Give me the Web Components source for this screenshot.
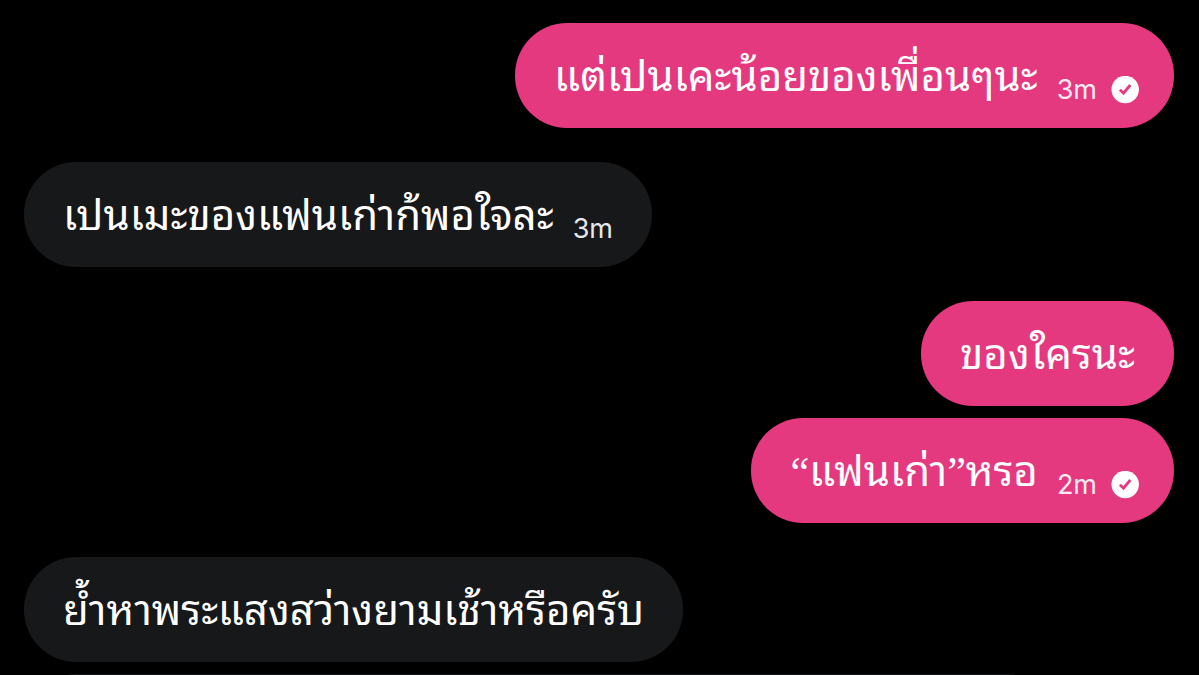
<!DOCTYPE html>
<html lang="th">
<head>
<meta charset="utf-8">
<meta name="viewport" content="width=device-width, initial-scale=1">
<title>Chat</title>
<style>
  body {
    margin: 0;
    background: #000;
  }
</style>
</head>
<body>

<chat-thread>
  <message-group side="sent">
    <chat-bubble side="sent" time="3m" read>แต่เปนเคะน้อยของเพื่อนๆนะ</chat-bubble>
  </message-group>
  <message-group>
    <chat-bubble time="3m">เปนเมะของแฟนเก่าก้พอใจละ</chat-bubble>
  </message-group>
  <message-group side="sent">
    <chat-bubble side="sent">ของใครนะ</chat-bubble>
    <chat-bubble side="sent" time="2m" read>“แฟนเก่า”หรอ</chat-bubble>
  </message-group>
  <message-group>
    <chat-bubble>ย้ำหาพระแสงสว่างยามเช้าหรือครับ</chat-bubble>
    <chat-bubble wide></chat-bubble>
  </message-group>
</chat-thread>

<script>
class ChatThread extends HTMLElement {
  constructor() {
    super();

    const shadow = this.attachShadow({ mode: 'open' });
    shadow.innerHTML = `
      <style>
        :host {
          display: flex;
          flex-direction: column;
          gap: 34px;
          box-sizing: border-box;
          height: 100vh;
          padding: 23px 25px 0 24px;
          overflow: hidden;
          background: #000;
          color: #fff;
          font-family: Inter, sans-serif;
        }
      </style>
      <slot></slot>
    `;
  }
}

class MessageGroup extends HTMLElement {
  constructor() {
    super();

    const shadow = this.attachShadow({ mode: 'open' });
    shadow.innerHTML = `
      <style>
        :host {
          display: flex;
          flex-direction: column;
          flex-shrink: 0;
          align-items: flex-start;
          gap: 12px;
        }
        :host([side="sent"]) {
          align-items: flex-end;
        }
      </style>
      <slot></slot>
    `;
  }
}

class ReadBadge extends HTMLElement {
  constructor() {
    super();

    const shadow = this.attachShadow({ mode: 'open' });
    shadow.innerHTML = `
      <style>
        :host {
          display: block;
          width: 28px;
          height: 28px;
        }
        svg {
          display: block;
        }
      </style>
      <svg width="28" height="28" viewBox="0 0 28 28" role="img" aria-label="Read">
        <circle cx="14.2" cy="13.5" r="13.7" fill="#fff"/>
        <path d="M8.9 13.7 L12.5 17.2 L19.3 9" fill="none" stroke="#e5397f" stroke-width="2.8"/>
      </svg>
    `;
  }
}

class ChatBubble extends HTMLElement {
  constructor() {
    super();

    // Attach a shadow DOM to the element.
    const shadow = this.attachShadow({ mode: 'open' });

    const template = document.createElement('template');
    template.innerHTML = `
      <style>
        :host {
          display: flex;
          align-items: center;
          box-sizing: border-box;
          min-height: 105px;
          max-width: 90%;
          padding: 0 39px;
          border-radius: 52px;
          background: #17181a;
        }
        :host([side="sent"]) {
          background: #e5397f;
        }
        :host([read]) {
          padding-right: 35px;
        }
        /* Long message, cut by the bottom of the window */
        :host([wide]) {
          width: 90%;
        }
        .text {
          margin: 0;
          padding-top: 2px;
          font-family: "Liberation Serif", Thonburi, "Noto Sans Thai Looped", "Noto Looped Thai", Waree, serif;
          font-size: 42px;
          line-height: 56px;
        }
        .meta {
          display: flex;
          align-items: center;
          gap: 14px;
          margin: 28px 0 0 19px;
          font-size: 27px;
          line-height: 28px;
        }
        .meta[hidden] {
          display: none;
        }
        time {
          opacity: 0.9;
        }
      </style>
      <p class="text"><slot></slot></p>
      <div class="meta" hidden><time></time></div>
    `;

    shadow.appendChild(template.content.cloneNode(true));
  }

  connectedCallback() {
    const meta = this.shadowRoot.querySelector('.meta');
    if (this.hasAttribute('time')) {
      meta.hidden = false;
      meta.querySelector('time').textContent = this.getAttribute('time');
    }
    if (this.hasAttribute('read')) {
      meta.appendChild(document.createElement('read-badge'));
    }
  }
}

customElements.define('chat-thread', ChatThread);
customElements.define('message-group', MessageGroup);
customElements.define('read-badge', ReadBadge);
customElements.define('chat-bubble', ChatBubble);
</script>
</body>
</html>
